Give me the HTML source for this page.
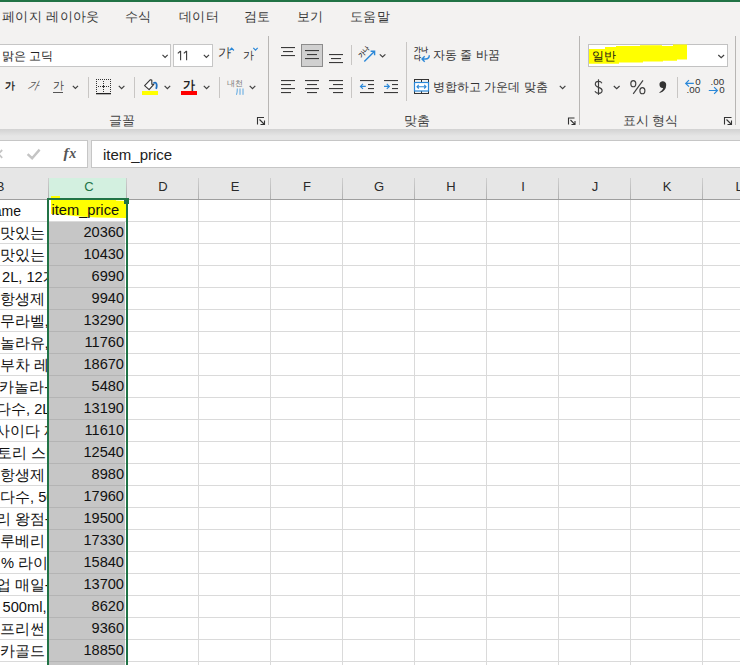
<!DOCTYPE html>
<html><head><meta charset="utf-8">
<style>
*{box-sizing:border-box;margin:0;padding:0}
html,body{width:740px;height:665px;overflow:hidden;background:#fff;font-family:"Liberation Sans",sans-serif;color:#262626}
.a{position:absolute}
#top{left:0;top:0;width:740px;height:2px;background:#217346}
#rib{left:0;top:2px;width:740px;height:127px;background:#f3f2f1}
.tab{top:8px;font-size:13px;letter-spacing:0.4px;color:#3b3b3b;white-space:nowrap;line-height:18px}
.sep{width:1px;background:#c8c6c4}
.gsep{width:1px;background:#b8b6b4}
.lbl{font-size:12.5px;color:#444;white-space:nowrap;line-height:14px;margin-top:1px}
#shade{left:0;top:129px;width:740px;height:49px;background:#e6e6e6}
#shgrad{left:0;top:129px;width:740px;height:7px;background:linear-gradient(#d2d2d2,#e6e6e6)}
.box{background:#fff;border:1px solid #c6c6c6}
.hdr{top:178px;height:21px;background:#e6e6e6;font-size:13px;color:#2a2a2a;text-align:center;line-height:17px;padding-left:2px}
.vl{width:1px;background:#dadada}
.hl{height:1px;background:#dadada;left:0;width:740px}
.num{font-size:14.6px;color:#111;text-align:right;line-height:20px;height:22px}
.bt{font-size:14.67px;color:#111;white-space:nowrap;line-height:22px;height:22px}
</style></head><body>
<div class="a" id="top"></div>
<div class="a" id="rib"></div>

<!-- tabs -->
<div class="a tab" style="left:2px">페이지 레이아웃</div>
<div class="a tab" style="left:125px">수식</div>
<div class="a tab" style="left:179px">데이터</div>
<div class="a tab" style="left:244px">검토</div>
<div class="a tab" style="left:297px">보기</div>
<div class="a tab" style="left:350px">도움말</div>

<!-- ribbon body -->
<div class="a box" style="left:-2px;top:44px;width:173px;height:23px"></div>
<div class="a" style="left:2px;top:47px;font-size:12.2px;line-height:18px;color:#222">맑은 고딕</div>
<div class="a box" style="left:173px;top:44px;width:40px;height:23px"></div>
<svg class="a" style="left:0;top:0" width="200" height="70"><path d="M180.6 51v9.2M177.8 53.3l2.8-2.3M186.6 51v9.2M183.8 53.3l2.8-2.3" fill="none" stroke="#3a3a3a" stroke-width="1.1"/></svg>

<div class="a gsep" style="left:268px;top:36px;height:89px"></div>
<div class="a gsep" style="left:579px;top:36px;height:89px"></div>
<div class="a gsep" style="left:735px;top:36px;height:89px"></div>


<svg class="a" style="left:0;top:0" width="740" height="130" viewBox="0 0 740 130">
<g fill="none" stroke="#404040" stroke-width="1.2">
 <!-- chevrons -->
 <path d="M162.5 54.8l2.6 2.6l2.6-2.6"/>
 <path d="M203.8 54.8l2.6 2.6l2.6-2.6"/>
 <path d="M72.8 85.8l2.6 2.6l2.6-2.6"/>
 <path d="M118.8 85.8l2.8 2.8l2.8-2.8"/>
 <path d="M164.6 85.8l2.8 2.8l2.8-2.8"/>
 <path d="M203.8 85.8l2.8 2.8l2.8-2.8"/>
 <path d="M249.7 85.8l2.8 2.8l2.8-2.8"/>
 <path d="M379.8 54.4l2.8 2.6l2.8-2.6"/>
 <path d="M559.8 85.8l2.8 2.8l2.8-2.8"/>
 <path d="M718.3 55l2.9 2.7l2.9-2.7"/>
 <path d="M613.8 86l2.9 2.7l2.9-2.7"/>
</g>
<!-- grow/shrink carets -->
<g fill="none" stroke="#2b88d8" stroke-width="1.2">
 <path d="M229.5 50.5l2.2-2.4l2.2 2.4"/>
 <path d="M253.3 47.8l2.2 2.4l2.2-2.4"/>
</g>
<!-- small separators -->
<g fill="#c8c6c4">
 <rect x="88" y="77" width="1" height="21"/>
 <rect x="134" y="77" width="1" height="21"/>
 <rect x="219" y="77" width="1" height="21"/>
 <rect x="351" y="45" width="1" height="20"/>
 <rect x="351" y="77" width="1" height="21"/>
 <rect x="406" y="42" width="1" height="59"/>
 <rect x="677" y="77" width="1" height="21"/>
</g>
<!-- underline for U -->
<rect x="53" y="92" width="10" height="1" fill="#555"/>
<!-- borders icon -->
<g fill="#333">
 <path d="M96 79h15v1h-15zM96 86h15v1h-15zM96 79h1v14h-1zM103 79h1v14h-1zM110 79h1v14h-1z" fill="none"/>
</g>
<g fill="#333"><rect x="96" y="79" width="1" height="1"/><rect x="96" y="81" width="1" height="1"/><rect x="96" y="83" width="1" height="1"/><rect x="96" y="85" width="1" height="1"/><rect x="96" y="87" width="1" height="1"/><rect x="96" y="89" width="1" height="1"/><rect x="96" y="91" width="1" height="1"/><rect x="96" y="93" width="1" height="1"/><rect x="98" y="79" width="1" height="1"/><rect x="98" y="86" width="1" height="1"/><rect x="100" y="79" width="1" height="1"/><rect x="100" y="86" width="1" height="1"/><rect x="102" y="79" width="1" height="1"/><rect x="102" y="86" width="1" height="1"/><rect x="103" y="81" width="1" height="1"/><rect x="103" y="83" width="1" height="1"/><rect x="103" y="85" width="1" height="1"/><rect x="103" y="86" width="1" height="1"/><rect x="103" y="87" width="1" height="1"/><rect x="103" y="89" width="1" height="1"/><rect x="103" y="91" width="1" height="1"/><rect x="104" y="79" width="1" height="1"/><rect x="104" y="86" width="1" height="1"/><rect x="106" y="79" width="1" height="1"/><rect x="106" y="86" width="1" height="1"/><rect x="108" y="79" width="1" height="1"/><rect x="108" y="86" width="1" height="1"/><rect x="110" y="79" width="1" height="1"/><rect x="110" y="81" width="1" height="1"/><rect x="110" y="83" width="1" height="1"/><rect x="110" y="85" width="1" height="1"/><rect x="110" y="87" width="1" height="1"/><rect x="110" y="89" width="1" height="1"/><rect x="110" y="91" width="1" height="1"/><rect x="110" y="93" width="1" height="1"/></g>
<rect x="96" y="93" width="15" height="1.3" fill="#222"/>
<!-- bucket -->
<path d="M144.6 85.6L150.4 79.7L151.8 80.1L151.8 84.3L153.8 84.3L149.1 89.6Z" fill="#fafafa" stroke="#333" stroke-width="1.1" stroke-linejoin="round"/>
<path d="M153.4 83.2q2.8-1.6 3.3 1.6q0.2 2.2-0.6 4" fill="none" stroke="#1e6fc0" stroke-width="1.8"/>
<rect x="142" y="91" width="16" height="4" fill="#ffff00"/>
<!-- font color red bar -->
<rect x="181" y="91" width="16" height="4" fill="#f00"/>
<!-- phonetic blue -->
<g stroke="#3c8fd8" stroke-width="1.1" fill="none">
 <path d="M237.3 88.5q0 4-0.8 6.3M240 88.5v6.3M243 88.5v6.3" stroke-width="0.9" stroke="#4a9ee0"/>
</g>
<!-- launchers -->
<g fill="none" stroke="#333" stroke-width="1.1">
 <path d="M257.5 124.5v-7h6.5M259.5 119.5l5 5M264.5 120.5v4h-4"/>
 <path d="M568.5 124.5v-6.5h6M570.5 120l4.6 4.6M575 121v3.5h-3.5"/>
 <path d="M724.5 124.5v-7h7M726.5 119.5l5 5M731.5 120.5v4h-4"/>
</g>
<!-- align icons -->
<g fill="#3a3a3a">
 <rect x="281" y="47" width="14" height="1.1"/><rect x="283" y="51" width="10" height="1.1"/><rect x="281" y="55" width="14" height="1.1"/>
 <rect x="301.5" y="44.5" width="21" height="22" fill="#d0d0d0" stroke="#8c8c8c" stroke-width="1"/>
 <rect x="305" y="50" width="14" height="1.1"/><rect x="307" y="54" width="10" height="1.1"/><rect x="305" y="58" width="14" height="1.1"/>
 <rect x="329" y="54" width="14" height="1.1"/><rect x="331" y="58" width="10" height="1.1"/><rect x="329" y="62" width="14" height="1.1"/>
 <rect x="281" y="80" width="14" height="1.1"/><rect x="281" y="84" width="10" height="1.1"/><rect x="281" y="88" width="14" height="1.1"/><rect x="281" y="92" width="10" height="1.1"/>
 <rect x="305" y="80" width="14" height="1.1"/><rect x="307" y="84" width="10" height="1.1"/><rect x="305" y="88" width="14" height="1.1"/><rect x="307" y="92" width="10" height="1.1"/>
 <rect x="329" y="80" width="14" height="1.1"/><rect x="333" y="84" width="10" height="1.1"/><rect x="329" y="88" width="14" height="1.1"/><rect x="333" y="92" width="10" height="1.1"/>
 <!-- indent -->
 <rect x="360" y="80" width="14" height="1.1"/><rect x="368" y="84" width="6" height="1.1"/><rect x="368" y="88" width="6" height="1.1"/><rect x="360" y="92" width="14" height="1.1"/>
 <rect x="384" y="80" width="14" height="1.1"/><rect x="392" y="84" width="6" height="1.1"/><rect x="392" y="88" width="6" height="1.1"/><rect x="384" y="92" width="14" height="1.1"/>
</g>
<g fill="none" stroke="#2b88d8" stroke-width="1.2">
 <path d="M360.5 86.4h5.3M363 83.9l-2.5 2.5l2.5 2.5"/>
 <path d="M384 86.4h5.3M386.8 83.9l2.5 2.5l-2.5 2.5"/>
 <!-- orientation arrow -->
 <path d="M364.3 61.6L374.6 51.3M370.6 51.3h4v4" stroke-width="1.4"/>
 <!-- wrap arrow -->
 <path d="M429.3 55.3q0 3.7-3.8 3.7h-3.2M424.7 56.3l-2.7 2.7l2.7 2.8" stroke-width="1.4"/>
</g>
<!-- merge icon -->
<g fill="none">
 <rect x="414.5" y="79.5" width="14" height="14" stroke="#333" stroke-width="1"/>
 <path d="M421.5 79.5v3M421.5 91v2.5" stroke="#333" stroke-width="1"/>
 <rect x="414.5" y="82.5" width="14" height="8.5" stroke="#2b88d8" stroke-width="1.2" fill="#fff"/>
 <path d="M417 86.7h9M418.8 84.9l-1.8 1.8l1.8 1.8M424.2 84.9l1.8 1.8l-1.8 1.8" stroke="#2b88d8" stroke-width="1.1"/>
</g>
<!-- decimals arrows -->
<g fill="none" stroke="#2b88d8" stroke-width="1.2">
 <path d="M685.6 83.4h8.2M689 80.1l-3.3 3.3l3.3 3.3"/>
 <path d="M708.8 90.5h8.6M714.1 87.2l3.3 3.3l-3.3 3.3"/>
</g>
</svg>
<div class="a" style="left:5px;top:79px;font-size:10px;font-weight:bold;line-height:14px;color:#222">가</div>
<div class="a" style="left:28px;top:78px;font-size:11px;font-style:italic;line-height:14px;color:#555;transform:skewX(-12deg)">가</div>
<div class="a" style="left:53px;top:78px;font-size:11px;line-height:14px;color:#444">가</div>
<div class="a" style="left:217.5px;top:45px;font-size:12.6px;line-height:16px;color:#333">가</div>
<div class="a" style="left:243px;top:48px;font-size:11px;line-height:14px;color:#333">가</div>
<div class="a" style="left:183px;top:78px;font-size:11.5px;font-weight:bold;line-height:14px;color:#222">가</div>
<div class="a" style="left:226.5px;top:77px;font-size:8.3px;line-height:12px;color:#777">내천</div>
<div class="a" style="left:358.3px;top:47.3px;font-size:6.3px;font-weight:bold;line-height:10px;color:#333;transform:rotate(-45deg);transform-origin:50% 50%">가나</div>
<div class="a" style="left:414px;top:45.5px;font-size:7.2px;font-weight:bold;line-height:8.5px;color:#333">가나<br>다</div>
<div class="a" style="left:433px;top:47px;font-size:12px;line-height:17px;color:#333">자동 줄 바꿈</div>
<div class="a" style="left:433px;top:79px;font-size:12px;line-height:17px;color:#333">병합하고 가운데 맞춤</div>


<div class="a box" style="left:588px;top:44px;width:140px;height:23px;border-color:#c2c2c2"></div>
<svg class="a" style="left:0;top:0" width="740" height="130">
<polygon fill="#ffff00" points="589,49 605,49 605,47.1 616,47.1 616,46 640,46 640,45.2 662,45.2 662,46 673,46 673,44.5 687,44.5 687,59.6 677,59.6 677,60.8 663,60.8 663,61.6 643,61.6 643,62.6 619,62.6 619,63.8 589,63.8"/>
<path d="M718.3 55l2.9 2.7l2.9-2.7" fill="none" stroke="#404040" stroke-width="1.2"/>
<path d="M662.4 81.3a3.4 3.3 0 0 1 3.8 3.6q0 5.6-6.5 8.2l-0.4-0.6q3.6-2.2 3.9-4.6a3.3 3.3 0 0 1-0.8-6.6z" fill="#333"/>
<g fill="none" stroke="#404040" stroke-width="1.15">
<path d="M598.5 79.3v15.6"/>
<path d="M601.9 83.2c-0.6-1.2-1.8-1.8-3.3-1.8c-2 0-3.3 1.1-3.3 2.8c0 3.9 6.8 2.4 6.8 6.3c0 1.8-1.4 2.8-3.5 2.8c-1.8 0-3-0.7-3.7-2"/>
<ellipse cx="633.3" cy="83.7" rx="2.5" ry="3.1"/>
<ellipse cx="642.4" cy="90.7" rx="2.5" ry="3.1"/>
<path d="M643 80.3L633.2 93.9"/>
</g>
</svg>
<div class="a" style="left:592px;top:47.5px;font-size:12.3px;line-height:16px;color:#111">일반</div>
<div class="a" style="left:695.3px;top:75.8px;font-size:9.8px;line-height:11px;color:#333">0</div>
<div class="a" style="left:686.5px;top:83.8px;font-size:9.8px;line-height:11px;color:#333">.00</div>
<div class="a" style="left:710.5px;top:75.8px;font-size:9.8px;line-height:11px;color:#333">.00</div>
<div class="a" style="left:719.2px;top:83.8px;font-size:9.8px;line-height:11px;color:#333">0</div>

<div class="a lbl" style="left:109px;top:113px">글꼴</div>
<div class="a lbl" style="left:404px;top:113px">맞춤</div>
<div class="a lbl" style="left:623px;top:113px">표시 형식</div>

<!-- formula bar -->
<div class="a" id="shade"></div>
<div class="a" id="shgrad"></div>
<div class="a box" style="left:-2px;top:140px;width:90px;height:28px"></div>
<div class="a box" style="left:91px;top:140px;width:660px;height:28px"></div>

<svg class="a" style="left:0;top:0" width="90" height="170">
<path d="M27.6 154.2L32.1 158.2L39.6 149.6" fill="none" stroke="#c4c4c4" stroke-width="2.4"/>
<path d="M-5.5 150L2.2 157.8M2.2 150L-5.5 157.8" fill="none" stroke="#c4c4c4" stroke-width="1.8"/>
</svg>
<div class="a" style="left:63.5px;top:143.5px;font-family:'Liberation Serif',serif;font-style:italic;font-weight:bold;font-size:15.5px;line-height:18px;color:#555">f<span style="font-size:14px;margin-left:0.5px">x</span></div>
<div class="a" style="left:103px;top:146px;font-size:15px;line-height:18px;color:#222">item_price</div>

<!-- headers -->
<div class="a hdr" style="left:0;width:48px"></div>
<div class="a hdr" style="left:48px;width:78px;background:#d3f0e0;color:#217346;padding-left:4px">C</div>
<div class="a hdr" style="left:126px;width:72px">D</div>
<div class="a" style="left:126px;top:178px;width:1px;height:21px;background:linear-gradient(#cfcfcf,#b0b0b0)"></div>
<div class="a hdr" style="left:198px;width:72px">E</div>
<div class="a" style="left:198px;top:178px;width:1px;height:21px;background:linear-gradient(#cfcfcf,#b0b0b0)"></div>
<div class="a hdr" style="left:270px;width:72px">F</div>
<div class="a" style="left:270px;top:178px;width:1px;height:21px;background:linear-gradient(#cfcfcf,#b0b0b0)"></div>
<div class="a hdr" style="left:342px;width:72px">G</div>
<div class="a" style="left:342px;top:178px;width:1px;height:21px;background:linear-gradient(#cfcfcf,#b0b0b0)"></div>
<div class="a hdr" style="left:414px;width:72px">H</div>
<div class="a" style="left:414px;top:178px;width:1px;height:21px;background:linear-gradient(#cfcfcf,#b0b0b0)"></div>
<div class="a hdr" style="left:486px;width:72px">I</div>
<div class="a" style="left:486px;top:178px;width:1px;height:21px;background:linear-gradient(#cfcfcf,#b0b0b0)"></div>
<div class="a hdr" style="left:558px;width:72px">J</div>
<div class="a" style="left:558px;top:178px;width:1px;height:21px;background:linear-gradient(#cfcfcf,#b0b0b0)"></div>
<div class="a hdr" style="left:630px;width:72px">K</div>
<div class="a" style="left:630px;top:178px;width:1px;height:21px;background:linear-gradient(#cfcfcf,#b0b0b0)"></div>
<div class="a hdr" style="left:702px;width:72px">L</div>
<div class="a" style="left:702px;top:178px;width:1px;height:21px;background:linear-gradient(#cfcfcf,#b0b0b0)"></div>
<div class="a hdr" style="left:0;width:48px"></div><div class="a hdr" style="left:-9px;width:16px;background:none">B</div>
<div class="a" style="left:48px;top:178px;width:1px;height:21px;background:linear-gradient(#cfcfcf,#b0b0b0)"></div>
<div class="a" style="left:0;top:199px;width:740px;height:1px;background:#9e9e9e"></div>

<div class="a vl" style="left:126px;top:200px;height:465px"></div>
<div class="a vl" style="left:198px;top:200px;height:465px"></div>
<div class="a vl" style="left:270px;top:200px;height:465px"></div>
<div class="a vl" style="left:342px;top:200px;height:465px"></div>
<div class="a vl" style="left:414px;top:200px;height:465px"></div>
<div class="a vl" style="left:486px;top:200px;height:465px"></div>
<div class="a vl" style="left:558px;top:200px;height:465px"></div>
<div class="a vl" style="left:630px;top:200px;height:465px"></div>
<div class="a vl" style="left:702px;top:200px;height:465px"></div>
<div class="a hl" style="top:221px"></div>
<div class="a hl" style="top:243px"></div>
<div class="a hl" style="top:265px"></div>
<div class="a hl" style="top:287px"></div>
<div class="a hl" style="top:309px"></div>
<div class="a hl" style="top:331px"></div>
<div class="a hl" style="top:353px"></div>
<div class="a hl" style="top:375px"></div>
<div class="a hl" style="top:397px"></div>
<div class="a hl" style="top:419px"></div>
<div class="a hl" style="top:441px"></div>
<div class="a hl" style="top:463px"></div>
<div class="a hl" style="top:485px"></div>
<div class="a hl" style="top:507px"></div>
<div class="a hl" style="top:529px"></div>
<div class="a hl" style="top:551px"></div>
<div class="a hl" style="top:573px"></div>
<div class="a hl" style="top:595px"></div>
<div class="a hl" style="top:617px"></div>
<div class="a hl" style="top:639px"></div>
<div class="a hl" style="top:661px"></div>
<div class="a" style="left:49px;top:222px;width:76px;height:443px;background:#c6c6c6"></div>
<div class="a" style="left:49px;top:243px;width:76px;height:1px;background:#b4b4b4"></div>
<div class="a" style="left:49px;top:265px;width:76px;height:1px;background:#b4b4b4"></div>
<div class="a" style="left:49px;top:287px;width:76px;height:1px;background:#b4b4b4"></div>
<div class="a" style="left:49px;top:309px;width:76px;height:1px;background:#b4b4b4"></div>
<div class="a" style="left:49px;top:331px;width:76px;height:1px;background:#b4b4b4"></div>
<div class="a" style="left:49px;top:353px;width:76px;height:1px;background:#b4b4b4"></div>
<div class="a" style="left:49px;top:375px;width:76px;height:1px;background:#b4b4b4"></div>
<div class="a" style="left:49px;top:397px;width:76px;height:1px;background:#b4b4b4"></div>
<div class="a" style="left:49px;top:419px;width:76px;height:1px;background:#b4b4b4"></div>
<div class="a" style="left:49px;top:441px;width:76px;height:1px;background:#b4b4b4"></div>
<div class="a" style="left:49px;top:463px;width:76px;height:1px;background:#b4b4b4"></div>
<div class="a" style="left:49px;top:485px;width:76px;height:1px;background:#b4b4b4"></div>
<div class="a" style="left:49px;top:507px;width:76px;height:1px;background:#b4b4b4"></div>
<div class="a" style="left:49px;top:529px;width:76px;height:1px;background:#b4b4b4"></div>
<div class="a" style="left:49px;top:551px;width:76px;height:1px;background:#b4b4b4"></div>
<div class="a" style="left:49px;top:573px;width:76px;height:1px;background:#b4b4b4"></div>
<div class="a" style="left:49px;top:595px;width:76px;height:1px;background:#b4b4b4"></div>
<div class="a" style="left:49px;top:617px;width:76px;height:1px;background:#b4b4b4"></div>
<div class="a" style="left:49px;top:639px;width:76px;height:1px;background:#b4b4b4"></div>
<div class="a" style="left:49px;top:661px;width:76px;height:1px;background:#b4b4b4"></div>
<div class="a" style="left:0;top:200px;width:47px;height:465px;overflow:hidden">
<div class="a bt" style="left:-48.3px;top:0;font-size:14px">item_name</div>
<div class="a bt" style="left:0px;top:22px;white-space:pre">맛있는 </div>
<div class="a bt" style="left:0px;top:44px;white-space:pre">맛있는 </div>
<div class="a bt" style="left:2px;top:66px;white-space:pre">2L, 12개</div>
<div class="a bt" style="left:0px;top:88px;white-space:pre">항생제 </div>
<div class="a bt" style="left:-0.5px;top:110px;white-space:pre">무라벨,</div>
<div class="a bt" style="left:-0.5px;top:132px;white-space:pre">놀라유,</div>
<div class="a bt" style="left:0px;top:154px;white-space:pre">부차 레</div>
<div class="a bt" style="left:-0.7px;top:176px;white-space:pre">카놀라-</div>
<div class="a bt" style="left:-4px;top:198px;white-space:pre">다수, 2L</div>
<div class="a bt" style="left:-4.7px;top:220px;white-space:pre">사이다 제</div>
<div class="a bt" style="left:-3px;top:242px;white-space:pre">토리 스마</div>
<div class="a bt" style="left:0px;top:264px;white-space:pre">항생제 </div>
<div class="a bt" style="left:0px;top:286px;white-space:pre">다수, 50</div>
<div class="a bt" style="left:-4.45px;top:308px;white-space:pre">리 왕점-</div>
<div class="a bt" style="left:0px;top:330px;white-space:pre">루베리 </div>
<div class="a bt" style="left:1px;top:352px;white-space:pre">% 라이</div>
<div class="a bt" style="left:-4.45px;top:374px;white-space:pre">업 매일-</div>
<div class="a bt" style="left:2.5px;top:396px;white-space:pre">500ml,</div>
<div class="a bt" style="left:0px;top:418px;white-space:pre">프리썬 </div>
<div class="a bt" style="left:0px;top:440px;white-space:pre">카골드 </div>
</div>
<svg class="a" style="left:0;top:0" width="140" height="230"><polygon fill="#ffff00" points="51,199.7 116,199.7 116,200.5 126,201 126,218 96,217.6 80,216.4 60,214.5 51,214"/><rect x="51" y="196" width="9" height="2" fill="#ffff00"/></svg>
<div class="a bt" style="left:51.5px;top:199px;font-size:14.67px">item_price</div>
<div class="a num" style="left:49px;width:75px;top:222px">20360</div>
<div class="a num" style="left:49px;width:75px;top:244px">10430</div>
<div class="a num" style="left:49px;width:75px;top:266px">6990</div>
<div class="a num" style="left:49px;width:75px;top:288px">9940</div>
<div class="a num" style="left:49px;width:75px;top:310px">13290</div>
<div class="a num" style="left:49px;width:75px;top:332px">11760</div>
<div class="a num" style="left:49px;width:75px;top:354px">18670</div>
<div class="a num" style="left:49px;width:75px;top:376px">5480</div>
<div class="a num" style="left:49px;width:75px;top:398px">13190</div>
<div class="a num" style="left:49px;width:75px;top:420px">11610</div>
<div class="a num" style="left:49px;width:75px;top:442px">12540</div>
<div class="a num" style="left:49px;width:75px;top:464px">8980</div>
<div class="a num" style="left:49px;width:75px;top:486px">17960</div>
<div class="a num" style="left:49px;width:75px;top:508px">19500</div>
<div class="a num" style="left:49px;width:75px;top:530px">17330</div>
<div class="a num" style="left:49px;width:75px;top:552px">15840</div>
<div class="a num" style="left:49px;width:75px;top:574px">13700</div>
<div class="a num" style="left:49px;width:75px;top:596px">8620</div>
<div class="a num" style="left:49px;width:75px;top:618px">9360</div>
<div class="a num" style="left:49px;width:75px;top:640px">18850</div>
<div class="a" style="left:47px;top:198px;width:81px;height:480px;border:2px solid #217346"></div>
<div class="a" style="left:124px;top:198px;width:5px;height:6px;background:#217346"></div>
</body></html>
